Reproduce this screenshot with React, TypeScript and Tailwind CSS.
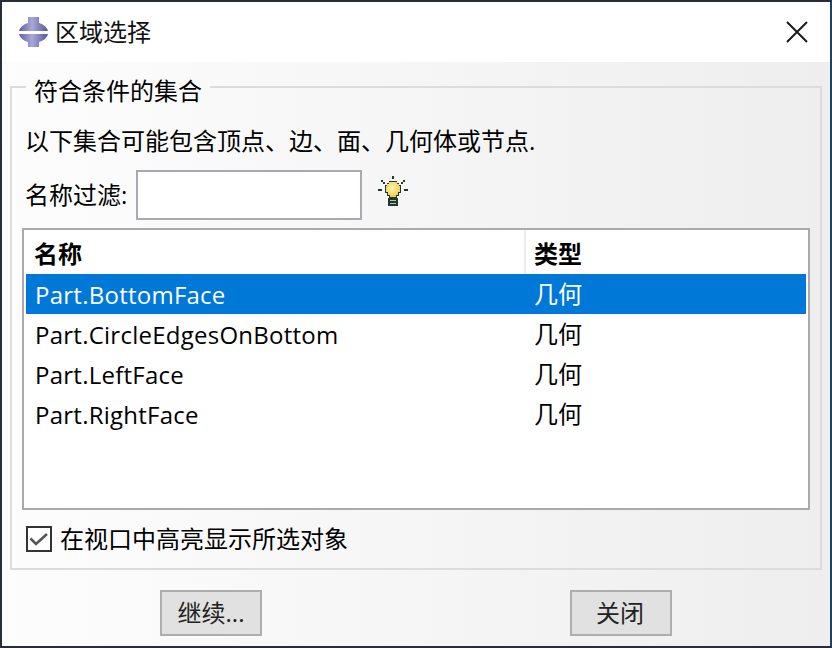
const font = '"Open Sans","Noto Sans CJK SC",sans-serif';

const rows = [
  { name: "Part.BottomFace", type: "几何", selected: true },
  { name: "Part.CircleEdgesOnBottom", type: "几何" },
  { name: "Part.LeftFace", type: "几何" },
  { name: "Part.RightFace", type: "几何" },
];

function AppIcon() {
  return (
    <svg width="30" height="30" viewBox="0 0 30 30">
      <defs>
        <linearGradient id="stem" x1="0" y1="0" x2="1" y2="0">
          <stop offset="0" stopColor="#5f5fa3" />
          <stop offset="0.45" stopColor="#a9a9d6" />
          <stop offset="1" stopColor="#55559a" />
        </linearGradient>
      </defs>
      <path d="M9 0H20V6C24 7 28 10 29 14H0C1 10 5 7 9 6Z" fill="url(#stem)" />
      <path d="M0 17H29C28 21 24 24 20 25V30H9V25C5 24 1 21 0 17Z" fill="url(#stem)" />
    </svg>
  );
}

function BulbIcon() {
  return (
    <svg width="30" height="30" viewBox="0 0 30 30" shapeRendering="crispEdges">
      <defs>
        <radialGradient id="glow" cx="0.45" cy="0.4" r="0.6">
          <stop offset="0" stopColor="#fff6b0" />
          <stop offset="1" stopColor="#f0cc50" />
        </radialGradient>
      </defs>
      <path d="M14 0h2v3h-2zM3 4h2v2h2v2H5V6H3zM25 4h2v2h-2v2h-2V6h2zM0 13h4v2H0zM26 13h4v2h-4z" fill="#1f3a2c" />
      <path d="M11 5h8v2h2v2h2v8h-2v3h-2v2h-8v-2H9v-3H7V9h2V7h2z" fill="#1f3a2c" />
      <path d="M11 6h8v2h2v2h1v6h-2v3h-2v2h-6v-2H10v-3H8v-6h1V8h2z" fill="url(#glow)" />
      <path d="M10 22h10v8H10z" fill="#1f3a2c" />
      <path d="M12 24h6v1h-6zM12 27h6v1h-6z" fill="#b9c4b4" />
    </svg>
  );
}

export default function App() {
  return (
    <div
      className="w-[832px] h-[648px] flex flex-col border-2 border-[#282d38] border-r-[#23405f] text-[24px] leading-[32px] text-black overflow-hidden"
      style={{ fontFamily: font }}
    >
      <div className="h-[60px] shrink-0 bg-white flex items-center pl-[17px] pr-[22px]">
        <div className="mr-[6px] mt-[-1px] flex">
          <AppIcon />
        </div>
        <span className="text-[#111]">区域选择</span>
        <svg className="ml-auto" width="22" height="22" viewBox="0 0 22 22">
          <path d="M1 1L21 21M21 1L1 21" stroke="#1a1a1a" strokeWidth="2" fill="none" />
        </svg>
      </div>

      <div className="flex-1 bg-gradient-to-r from-[#fdfdfd] to-[#eeeeee] px-[8px] pt-[5px] flex flex-col">
        <fieldset className="h-[503px] border-2 border-[#dcdcdc] px-[10px]">
          <legend className="ml-[4px] px-[8px] pt-[8px]">符合条件的集合</legend>
          <div className="pl-[3px] h-[34px] mt-[17px] flex items-center">以下集合可能包含顶点、边、面、几何体或节点.</div>
          <div className="flex items-center h-[50px] mt-[12px] pl-[3px]">
            <span className="w-[111px]">名称过滤:</span>
            <input className="w-[226px] h-[50px] bg-white border-2 border-[#a9a9b0] outline-none" />
            <div className="ml-[16px] mt-[-8px] flex">
              <BulbIcon />
            </div>
          </div>
          <div className="mt-[8px] h-[282px] bg-white border-2 border-[#a9a9ae] px-[2px]">
            <div className="h-[44px] flex items-center font-bold">
              <div className="w-[500px] h-full pl-[8px] pt-[4px] border-r-2 border-[#ececec] flex items-center">名称</div>
              <div className="pl-[8px] pt-[4px] flex items-center">类型</div>
            </div>
            {rows.map((r) => (
              <div
                key={r.name}
                className={
                  r.selected
                    ? "h-[40px] flex items-center bg-[#0078d7] text-white"
                    : "h-[40px] flex items-center"
                }
              >
                <div className="w-[500px] pl-[9px] pt-[1px] tracking-[0.25px]">{r.name}</div>
                <div className="pl-[8px]">{r.type}</div>
              </div>
            ))}
          </div>
          <div className="mt-[13px] flex items-center pl-[4px]">
            <div className="w-[26px] h-[26px] border-2 border-[#333] bg-white flex items-center justify-center mr-[8px]">
              <svg width="20" height="20" viewBox="0 0 20 20">
                <path d="M1.5 9.5L7 15L18 5" stroke="#555" strokeWidth="2.5" fill="none" />
              </svg>
            </div>
            <span>在视口中高亮显示所选对象</span>
          </div>
        </fieldset>
        <div className="flex mt-[20px] pl-[150px]">
          <button className="w-[102px] h-[46px] bg-[#e1e1e1] border-2 border-[#adadad] text-[#222]">继续...</button>
          <button className="w-[102px] h-[46px] bg-[#e1e1e1] border-2 border-[#adadad] ml-[308px] pr-[2px] text-[#222]">关闭</button>
        </div>
      </div>
    </div>
  );
}
